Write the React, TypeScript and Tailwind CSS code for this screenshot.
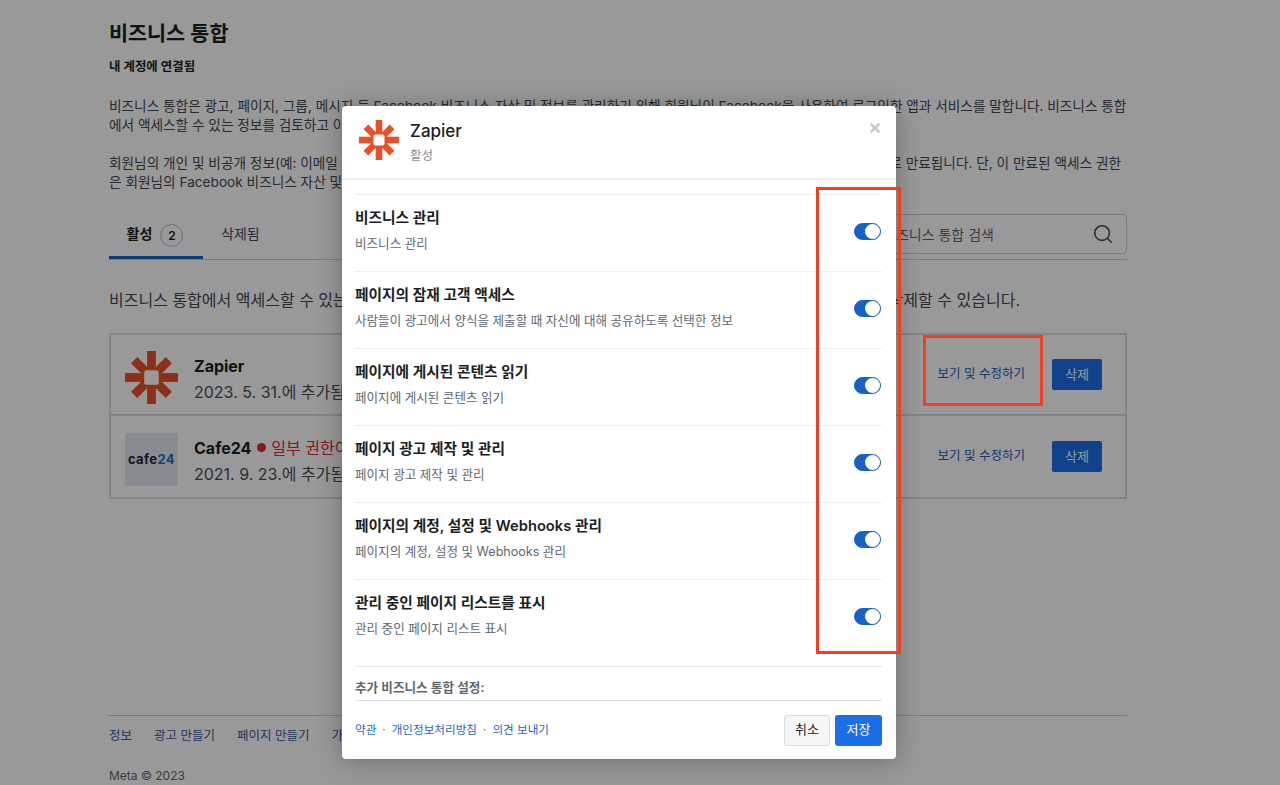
import { Search, X } from 'lucide-react'

const permissions = [
  { title: '비즈니스 관리', desc: '비즈니스 관리' },
  { title: '페이지의 잠재 고객 액세스', desc: '사람들이 광고에서 양식을 제출할 때 자신에 대해 공유하도록 선택한 정보' },
  { title: '페이지에 게시된 콘텐츠 읽기', desc: '페이지에 게시된 콘텐츠 읽기' },
  { title: '페이지 광고 제작 및 관리', desc: '페이지 광고 제작 및 관리' },
  { title: '페이지의 계정, 설정 및 Webhooks 관리', desc: '페이지의 계정, 설정 및 Webhooks 관리' },
  { title: '관리 중인 페이지 리스트를 표시', desc: '관리 중인 페이지 리스트 표시' },
]

function ZapierLogo({ className }: { className: string }) {
  return (
    <svg viewBox="0 0 40 40" className={className}>
      <g fill="#e8502a">
        <rect x="16.7" y="0" width="6.6" height="40" />
        <rect x="0" y="16.7" width="40" height="6.6" />
        <rect x="16.7" y="1.5" width="6.6" height="37" transform="rotate(45 20 20)" />
        <rect x="16.7" y="1.5" width="6.6" height="37" transform="rotate(-45 20 20)" />
      </g>
      <rect x="14.5" y="14.5" width="11" height="11" rx="2" fill="#fff" />
    </svg>
  )
}

function Toggle() {
  return (
    <div className="flex h-[17px] w-[27px] items-center justify-end rounded-full border border-[#1760c4] bg-[#1760c4]">
      <div className="h-[15px] w-[15px] rounded-full bg-white" />
    </div>
  )
}

function IntegrationRow({ logo, name, date, warning }: { logo: React.ReactNode; name: string; date: string; warning?: boolean }) {
  return (
    <div className="flex h-[81px] items-center pl-[14px] pr-[23px]">
      <div className="mt-[6px]">{logo}</div>
      <div className="ml-4 mt-[8px] flex-1">
        <div className="flex items-center text-base leading-[22px]">
          <span className="font-bold text-[#1c1e21]">{name}</span>
          {warning && (
            <>
              <span className="ml-[6px] h-[9px] w-[9px] rounded-full bg-[#e02b2b]" />
              <span className="ml-[5px] text-[#e02b2b]">일부 권한이 만료</span>
            </>
          )}
        </div>
        <div className="mt-[4px] text-base leading-[22px] text-[#4b4f56]">{date}</div>
      </div>
      <a className="mr-[27px] text-[12.5px] text-[#1d5ab8]">보기 및 수정하기</a>
      <button className="flex h-[31px] w-[50px] items-center justify-center rounded-[2px] bg-[#1a6fe6] text-[13px] text-white">
        삭제
      </button>
    </div>
  )
}

export default function App() {
  return (
    <div className="relative h-[785px] overflow-hidden bg-white font-['Inter','Noto_Sans_CJK_KR',sans-serif] text-[#1c1e21]">
      <div className="ml-[109px] w-[1018px] pt-[21px]">
        <h1 className="text-[20.7px] font-semibold leading-[26px]">비즈니스 통합</h1>
        <p className="mt-[12px] text-[12.4px] font-semibold leading-[16px]">내 계정에 연결됨</p>
        <div className="mt-[22px] text-[13.65px] leading-[19px] text-[#444950]">
          <p className="whitespace-nowrap">
            비즈니스 통합은 광고, 페이지, 그룹, 메시지 등 Facebook 비즈니스 자산 및 정보를 관리하기 위해 회원님이 Facebook을 사용하여 로그인한 앱과 서비스를 말합니다. 비즈니스 통합
          </p>
          <p>에서 액세스할 수 있는 정보를 검토하고 이</p>
          <div className="mt-[19px] flex w-[1012px] justify-between whitespace-nowrap">
            <span>회원님의 개인 및 비공개 정보(예: 이메일</span>
            <span>로 만료됩니다. 단, 이 만료된 액세스 권한</span>
          </div>
          <p>은 회원님의 Facebook 비즈니스 자산 및</p>
        </div>

        <div className="mt-[13px] flex h-[55px] items-end justify-between border-b border-[#ccd0d5]">
          <div className="flex h-[45px] items-start text-[14px] leading-[20px]">
            <div className="flex h-[45px] w-[94px] items-start justify-center border-b-[3px] border-[#1760c4] pr-[2px] pt-[10px]">
              <span className="font-semibold">활성</span>
              <span className="ml-[8px] flex h-[23px] w-[23px] items-center justify-center rounded-full border border-[#bbb] text-xs font-semibold">2</span>
            </div>
            <div className="ml-[18px] pt-[10px] text-[#4b4f56]">삭제됨</div>
          </div>
          <div className="mb-[5px] flex h-[40px] w-[258px] items-center justify-between rounded-[4px] border border-[#ccd0d5] pl-[13px] pr-[12px]">
            <span className="text-[14px] text-[#606770]">비즈니스 통합 검색</span>
            <Search className="h-[22px] w-[22px] text-[#4b4f56]" strokeWidth={1.75} />
          </div>
        </div>

        <div className="mt-[29px] flex w-[911px] justify-between whitespace-nowrap text-base leading-[22px] text-[#444950]">
          <span>비즈니스 통합에서 액세스할 수 있는</span>
          <span>삭제할 수 있습니다.</span>
        </div>

        <div className="mt-[22px] divide-y-2 divide-[#dadde1] border-2 border-[#dadde1]">
          <IntegrationRow
            logo={<ZapierLogo className="h-[53px] w-[53px]" />}
            name="Zapier"
            date="2023. 5. 31.에 추가됨"
          />
          <IntegrationRow
            logo={
              <div className="flex h-[53px] w-[53px] items-center justify-center bg-[#e3eaf1] text-[13px] font-bold tracking-[0.4px] text-[#1c2b3a]">
                cafe<span className="text-[#2a6fb5]">24</span>
              </div>
            }
            name="Cafe24"
            date="2021. 9. 23.에 추가됨"
            warning
          />
        </div>

        <div className="mt-[216px] flex gap-[22px] border-t border-[#ccd0d5] pt-[11px] text-[12.5px] leading-[18px] text-[#385898]">
          <a>정보</a>
          <a>광고 만들기</a>
          <a>페이지 만들기</a>
          <a>가이드</a>
        </div>
        <p className="mt-[23px] text-xs leading-[16px] text-[#606770]">Meta © 2023</p>
      </div>

      <div className="absolute inset-0 bg-black/40 pl-[342px] pt-[106px]">
        <div className="flex h-[653px] w-[554px] flex-col overflow-hidden rounded-[4px] bg-white shadow-[0_2px_26px_rgba(0,0,0,0.3)]">
          <div className="relative flex h-[74px] shrink-0 border-b-2 border-[#eceef0] pl-[17px] pt-[14px]">
            <ZapierLogo className="h-[40px] w-[40px]" />
            <div className="ml-[11px]">
              <div className="text-[17px] font-medium leading-[22px] text-[#1c1e21]">Zapier</div>
              <div className="mt-[5px] text-[12.5px] leading-[18px] text-[#8a8d91]">활성</div>
            </div>
            <X className="absolute right-[14px] top-[15px] h-[14px] w-[14px] text-[#c6c8cc]" strokeWidth={4.5} />
          </div>

          <div className="flex-1 overflow-hidden pl-[13px] pr-[14px] pt-[14px]">
            {permissions.map(p => (
              <div key={p.title} className="flex h-[77px] items-start justify-between border-t border-[#eceef0] pt-[13px]">
                <div>
                  <div className="text-[14.7px] font-semibold leading-[20px] text-[#1c1e21]">{p.title}</div>
                  <div className="mt-[7px] text-[12.55px] leading-[18px] text-[#606770]">{p.desc}</div>
                </div>
                <div className="mr-[1px] mt-[15px]">
                  <Toggle />
                </div>
              </div>
            ))}
            <div className="mt-[10px] border-t border-[#e4e6eb] pt-[12px] text-[12.6px] font-semibold leading-[18px] text-[#606770]">
              추가 비즈니스 통합 설정:
            </div>
          </div>

          <div className="ml-[13px] mr-[14px] flex h-[59px] shrink-0 items-center justify-between border-t border-[#dadde1]">
            <div className="mt-[2px] flex items-center text-[11.6px] text-[#1a66cc]">
              <a>약관</a>
              <span className="mx-[6px] text-[#606770]">·</span>
              <a>개인정보처리방침</a>
              <span className="mx-[6px] text-[#606770]">·</span>
              <a>의견 보내기</a>
            </div>
            <div className="flex gap-[5px] text-[13px]">
              <button className="h-[31px] w-[46px] rounded-[3px] border border-[#dadde1] bg-[#f5f6f7] text-[#1c1e21]">취소</button>
              <button className="h-[31px] w-[47px] rounded-[3px] bg-[#1a6fe6] text-white">저장</button>
            </div>
          </div>
        </div>
      </div>

      <div className="absolute left-[816px] top-[187px] h-[467px] w-[85px] border-[3px] border-[#f0401f]" />
      <div className="absolute left-[923px] top-[335px] h-[71px] w-[120px] border-[3px] border-[#f0401f]" />
    </div>
  )
}
